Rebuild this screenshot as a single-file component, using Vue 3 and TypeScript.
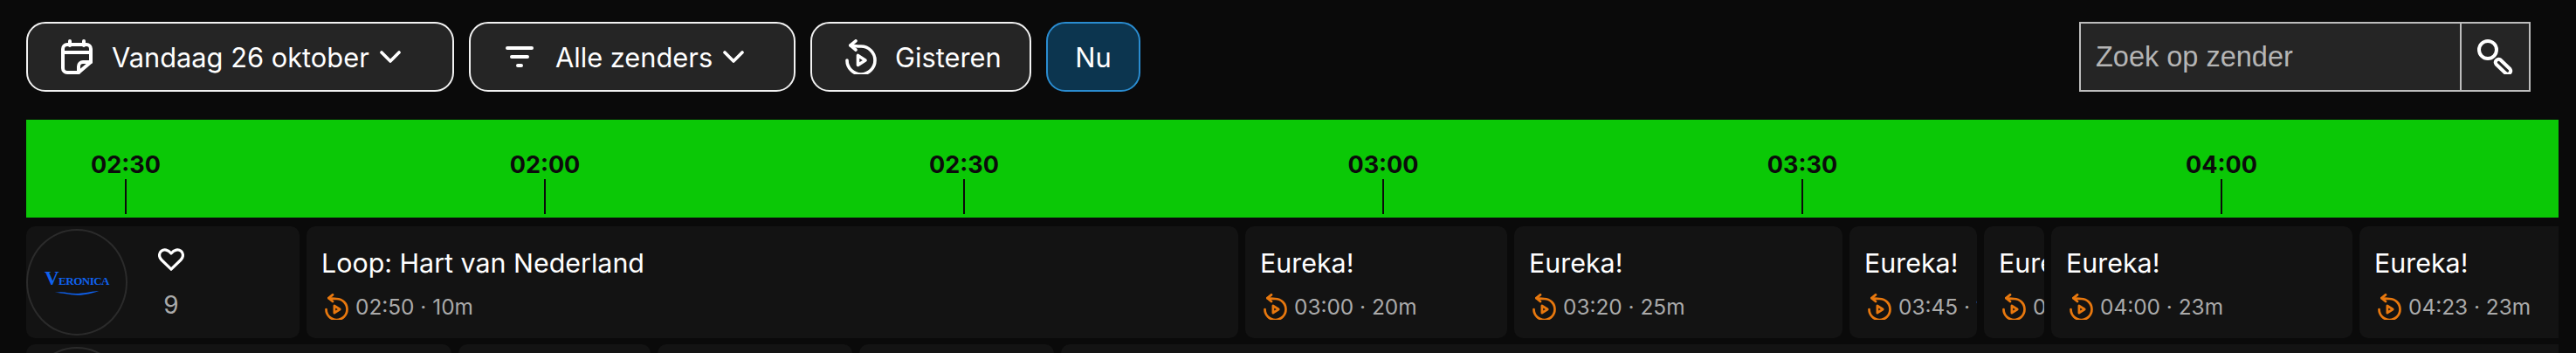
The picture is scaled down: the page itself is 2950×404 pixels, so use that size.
<template>
  <div class="page">
    <div class="toolbar">
      <button class="btn date-btn">
        <svg class="cal-icon" viewBox="0 0 36 40" fill="none" stroke="currentColor" stroke-width="4" stroke-linecap="round" stroke-linejoin="round">
          <path d="M10 2v5M26 2v5" />
          <path d="M20 38H7a5 5 0 0 1-5-5V11a5 5 0 0 1 5-5h22a5 5 0 0 1 5 5v15L20 38z" />
          <path d="M2 15h32" />
          <path d="M20 38v-7a5 5 0 0 1 5-5h9" />
        </svg>
        <span>Vandaag 26 oktober</span>
        <svg class="chevron" viewBox="0 0 24 14" fill="none" stroke="currentColor" stroke-width="3.6" stroke-linecap="round" stroke-linejoin="round">
          <path d="M2 2l10 10L22 2" />
        </svg>
      </button>
      <button class="btn filter-btn">
        <svg class="filter-icon" viewBox="0 0 32 26" fill="none" stroke="currentColor" stroke-width="4" stroke-linecap="round">
          <path d="M2 3h28M7 13h18M14 23h4" />
        </svg>
        <span>Alle zenders</span>
        <svg class="chevron" viewBox="0 0 24 14" fill="none" stroke="currentColor" stroke-width="3.6" stroke-linecap="round" stroke-linejoin="round">
          <path d="M2 2l10 10L22 2" />
        </svg>
      </button>
      <button class="btn replay-btn">
        <svg class="replay-icon" viewBox="0 0 36 40" fill="none" stroke="currentColor" stroke-width="3.6" stroke-linecap="round" stroke-linejoin="round">
          <path d="M12 1.8L5.8 6.8 12 12" />
          <path d="M6 7c4 .3 8 1 12 1a16 16 0 1 1-16 16" />
          <path d="M14.5 18.5v11l8.5-5.5z" />
        </svg>
        <span>Gisteren</span>
      </button>
      <button class="btn now-btn">Nu</button>

      <div class="search">
        <div class="search-input">Zoek op zender</div>
        <div class="search-btn">
          <svg class="search-icon" viewBox="0 0 42 40" fill="none" stroke="currentColor" stroke-width="4" stroke-linecap="round" stroke-linejoin="round">
            <circle cx="12" cy="12" r="10" />
            <path d="M26.5 23.5l11 10.5a3.6 3.6 0 0 1-5 5l-11-10.5a3.6 3.6 0 0 1 5-5z" />
          </svg>
        </div>
      </div>
    </div>

    <div class="timeline">
      <div v-for="(time, i) in times" :key="i" class="tick">
        <span class="tick-label">{{ time }}</span>
        <span class="tick-line" />
      </div>
    </div>

    <div class="row">
      <div class="cell channel">
        <div class="logo">
          <div class="logo-text"><span class="logo-v">V</span>ERONICA</div>
          <svg class="logo-wave" viewBox="0 0 60 6" fill="currentColor">
            <path d="M2 3c12-3 18 2 30 1s18-3 26-3c-8 2-16 5-27 5S12 3 2 3z" />
          </svg>
        </div>
        <div class="fav">
          <svg class="heart" viewBox="0 0 30 26" fill="none" stroke="currentColor" stroke-width="3.2" stroke-linejoin="round">
            <path d="M15 24.2L4 13.5C.6 10.2.9 5.6 3.8 3.3c3-2.4 7.6-1.7 11.2 2.7 3.6-4.4 8.2-5.1 11.2-2.7 2.9 2.3 3.2 6.9-.2 10.2L15 24.2z" />
          </svg>
          <span class="fav-count">9</span>
        </div>
      </div>
      <div v-for="item in programs" :key="item.time" class="cell program" :style="{ width: item.width + 'px' }">
        <div class="title">{{ item.title }}</div>
        <div class="meta">
          <svg class="meta-icon" viewBox="0 0 36 40" fill="none" stroke="currentColor" stroke-width="3.6" stroke-linecap="round" stroke-linejoin="round">
            <path d="M12 1.8L5.8 6.8 12 12" />
            <path d="M6 7c4 .3 8 1 12 1a16 16 0 1 1-16 16" />
            <path d="M14.5 18.5v11l8.5-5.5z" />
          </svg>
          <span>{{ item.time }} · {{ item.length }}</span>
        </div>
      </div>
    </div>

    <div class="row">
      <div class="cell channel next-channel">
        <div class="logo" />
      </div>
      <div v-for="(width, i) in nextWidths" :key="i" class="cell" :style="{ width: width + 'px' }" />
    </div>
  </div>
</template>

<script setup lang="ts">
interface Program {
  title: string
  time: string
  length: string
  width: number
}

const times = ['02:30', '02:00', '02:30', '03:00', '03:30', '04:00']

const programs: Program[] = [
  { title: 'Loop: Hart van Nederland', time: '02:50', length: '10m', width: 1067 },
  { title: 'Eureka!', time: '03:00', length: '20m', width: 300 },
  { title: 'Eureka!', time: '03:20', length: '25m', width: 376 },
  { title: 'Eureka!', time: '03:45', length: '10m', width: 146 },
  { title: 'Eureka!', time: '03:55', length: '5m', width: 69 },
  { title: 'Eureka!', time: '04:00', length: '23m', width: 345 },
  { title: 'Eureka!', time: '04:23', length: '23m', width: 240 },
]

const nextWidths = [220, 223, 223, 1730]
</script>

<style>
html,
body {
  margin: 0;
  background: #0a0a0a;
  overflow: hidden;
}
</style>

<style scoped>
.page {
  width: 2950px;
  height: 404px;
  box-sizing: border-box;
  padding: 25px 20px 0 30px;
  overflow: hidden;
  background: #0a0a0a;
  color: #fff;
  font-family: Inter, 'Noto Sans', sans-serif;
}
.toolbar {
  display: flex;
  gap: 17px;
  height: 80px;
  margin-bottom: 32px;
  padding-right: 32px;
}
.btn {
  display: flex;
  align-items: center;
  box-sizing: border-box;
  height: 80px;
  padding: 0;
  border: 2px solid #f2f2f2;
  border-radius: 22px;
  background: #252525;
  color: #fff;
  font-family: inherit;
  font-size: 30.8px;
}
.date-btn {
  width: 490px;
  padding-left: 38px;
}
.date-btn span {
  margin-left: 22px;
  margin-right: 12px;
}
.filter-btn {
  width: 374px;
  padding-left: 40px;
}
.filter-btn span {
  margin-left: 25px;
  margin-right: 12px;
}
.replay-btn {
  width: 253px;
  padding-left: 38px;
}
.replay-btn span {
  margin-left: 21px;
}
.now-btn {
  justify-content: center;
  width: 108px;
  border-color: #2a8cd0;
  background: #0c354f;
}
.cal-icon,
.replay-icon {
  flex: none;
  width: 36px;
  height: 40px;
}
.filter-icon {
  flex: none;
  width: 32px;
  height: 26px;
}
.chevron {
  flex: none;
  width: 24px;
  height: 14px;
}
.search {
  display: flex;
  box-sizing: border-box;
  width: 517px;
  height: 80px;
  margin-left: auto;
  border: 2px solid #bdbdbd;
  background: #252525;
}
.search-input {
  flex: 1;
  display: flex;
  align-items: center;
  padding-left: 17px;
  color: #b5b5b5;
  font-family: 'Liberation Sans', Arial, sans-serif;
  font-size: 32.5px;
}
.search-btn {
  display: flex;
  align-items: center;
  justify-content: center;
  width: 77px;
  border-left: 2px solid #bdbdbd;
}
.search-icon {
  width: 42px;
  height: 40px;
}
.timeline {
  display: flex;
  gap: 360px;
  box-sizing: border-box;
  width: 2900px;
  height: 112px;
  padding-left: 54px;
  margin-bottom: 10px;
  background: #0bc806;
  color: #0b0b0b;
}
.tick {
  display: flex;
  flex-direction: column;
  align-items: center;
  width: 120px;
}
.tick-label {
  margin-top: 36px;
  height: 32px;
  line-height: 32px;
  font-size: 27px;
  font-weight: 700;
}
.tick-line {
  width: 2px;
  height: 40px;
  background: #0b0b0b;
}
.row {
  display: flex;
  gap: 8px;
  width: 2900px;
  height: 128px;
  margin-bottom: 7px;
  overflow: hidden;
}
.cell {
  flex: none;
  box-sizing: border-box;
  height: 128px;
  border-radius: 10px;
  background: #131313;
  overflow: hidden;
}
.channel {
  display: flex;
  align-items: center;
  width: 313px;
}
.next-channel {
  width: 487px;
}
.logo {
  flex: none;
  display: flex;
  flex-direction: column;
  align-items: center;
  justify-content: center;
  box-sizing: border-box;
  width: 116px;
  height: 122px;
  border: 2px solid #2b2b2b;
  border-radius: 50%;
  color: #0f62f0;
}
.logo-text {
  font-family: 'Liberation Serif', serif;
  font-size: 13px;
  font-weight: 700;
  line-height: 20px;
  letter-spacing: -0.5px;
  white-space: nowrap;
}
.logo-v {
  font-size: 23px;
}
.logo-wave {
  width: 54px;
  height: 6px;
}
.fav {
  display: flex;
  flex-direction: column;
  align-items: center;
  gap: 26px;
  width: 100px;
  margin-top: -1px;
}
.heart {
  width: 30px;
  height: 26px;
}
.fav-count {
  color: #aaa;
  font-size: 28px;
  line-height: 26px;
}
.program {
  padding: 22px 0 0 17px;
}
.title {
  height: 40px;
  line-height: 40px;
  font-size: 30.4px;
  white-space: nowrap;
}
.meta {
  display: flex;
  align-items: center;
  gap: 8px;
  margin-top: 15px;
  color: #aaa;
  font-size: 24.4px;
  white-space: nowrap;
}
.meta-icon {
  flex: none;
  width: 27px;
  height: 30px;
  margin-left: 4px;
  color: #e8780e;
}
</style>
